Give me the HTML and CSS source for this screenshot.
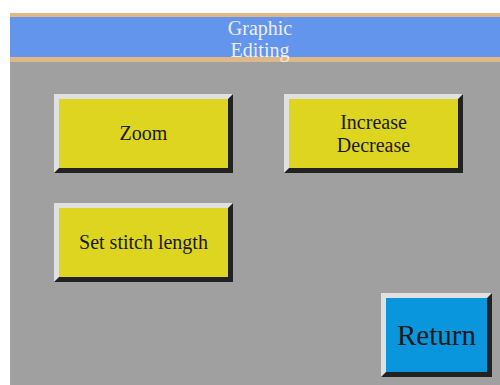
FILE: index.html
```html
<!DOCTYPE html>
<html lang="en">
<head>
    <meta charset="UTF-8">
    <meta name="viewport" content="width=device-width, initial-scale=1.0">
    <title>Graphic Editing</title>
    <link rel="stylesheet" href="styles.css">
</head>
<body>
    <div class="panel">
        <div class="header">Graphic<br>Editing</div>
        <div class="menu">
            <button class="btn">Zoom</button>
            <button class="btn">Increase<br>Decrease</button>
            <button class="btn">Set stitch length</button>
        </div>
        <div class="footer">
            <button class="btn return">Return</button>
        </div>
    </div>
</body>
</html>
```

FILE: styles.css
```css
body {
    margin: 0;
    background-color: #fff;
    font-family: "Liberation Serif", serif;
    overflow: hidden;
}

.panel {
    margin: 13px 0 0 10px;
    width: 500px;
    height: 380px;
    background-color: #a0a0a0;
}

.header {
    height: 40px;
    border-top: 4px solid #deb887;
    border-bottom: 5px solid #deb887;
    background-color: #6495ed;
    color: #eeeeee;
    font-size: 20px;
    line-height: 22px;
    text-align: center;
}

.menu {
    display: grid;
    grid-template-columns: 179px 179px;
    column-gap: 51px;
    row-gap: 30px;
    padding: 32px 0 0 44px;
}

.btn {
    height: 79px;
    border-style: solid;
    border-width: 5px;
    border-color: #e0e0e0 #222 #222 #e0e0e0;
    background-color: #ddd520;
    color: #1a1a1a;
    font-family: "Liberation Serif", serif;
    font-size: 20px;
    line-height: 23px;
    padding: 0;
}

.footer {
    display: flex;
    justify-content: flex-end;
    padding: 11px 18px 0 0;
}

.return {
    width: 111px;
    height: 84px;
    background-color: #0a96dc;
    font-size: 29px;
}
```
